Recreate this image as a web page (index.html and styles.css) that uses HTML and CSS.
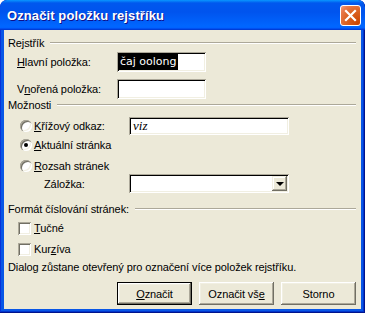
FILE: index.html
```html
<!DOCTYPE html>
<html lang="cs">
<head>
  <meta charset="UTF-8" />
  <title>Označit položku rejstříku</title>
  <link rel="stylesheet" href="styles.css">
</head>
<body>
  <div class="window">
    <div class="titlebar">
      <span class="title">Označit položku rejstříku</span>
      <div class="close">
        <svg width="21" height="21" viewBox="0 0 21 21">
          <path d="M6 6 L15 15 M15 6 L6 15" stroke="#fff" stroke-width="2.2" stroke-linecap="square"/>
        </svg>
      </div>
    </div>

    <div class="client">
      <!-- Rejstřík -->
      <div class="group-head h1"><span>Rejstřík</span><i></i></div>
      <div class="row entry r-main">
        <label><u>H</u>lavní položka:</label>
        <div class="field entry-field"><span class="sel">čaj oolong</span></div>
      </div>
      <div class="row entry r-sub">
        <label>V<u>n</u>ořená položka:</label>
        <div class="field entry-field"></div>
      </div>

      <!-- Možnosti -->
      <div class="group-head h2"><span>Možnosti</span><i></i></div>
      <div class="row opt r-cross">
        <span class="radio"></span>
        <label class="opt-label"><u>K</u>řížový odkaz:</label>
        <div class="field wide-field"><span class="viz">viz</span></div>
      </div>
      <div class="row opt r-cur">
        <span class="radio on"></span>
        <label><u>A</u>ktuální stránka</label>
      </div>
      <div class="row opt r-range">
        <span class="radio"></span>
        <label><u>R</u>ozsah stránek</label>
      </div>
      <div class="row r-mark">
        <label class="mark-label">Záložka:</label>
        <div class="field combo">
          <span class="drop"><i></i></span>
        </div>
      </div>

      <!-- Formát -->
      <div class="group-head h3"><span>Formát číslování stránek:</span><i></i></div>
      <div class="row chk r-bold">
        <span class="check"></span>
        <label><u>T</u>učné</label>
      </div>
      <div class="row chk r-ital">
        <span class="check"></span>
        <label>Kur<u>z</u>íva</label>
      </div>

      <div class="row note">Dialog zůstane otevřený pro označení více položek rejstříku.</div>

      <div class="buttons">
        <div class="btn default"><span><u>O</u>značit</span></div>
        <div class="btn"><span>Označit vš<u>e</u></span></div>
        <div class="btn"><span>Storno</span></div>
      </div>
    </div>
  </div>
</body>
</html>
```

FILE: styles.css
```css
* { box-sizing: border-box; }
body {
  margin: 0;
  background: #fff;
  font-family: 'Liberation Sans', Arial, sans-serif;
  font-size: 11px;
  letter-spacing: -0.1px;
  color: #000;
}
u { text-decoration: underline; text-underline-offset: 1px; }

.window {
  width: 365px;
  height: 313px;
  display: flex;
  flex-direction: column;
  background: #0856e6;
  border-radius: 7px 7px 0 0;
  box-shadow: inset -1px -1px #00138c, inset 1px 1px #0831d9, inset -2px -2px #0035cc;
  overflow: hidden;
}
.titlebar {
  height: 30px;
  flex: none;
  display: flex;
  align-items: center;
  justify-content: space-between;
  padding: 0 4px 0 7px;
  background: linear-gradient(180deg, #0997ff, #0058ee 10%, #0054ee 40%, #0066ff 86%, #0066ff 91%, #005bff 94%, #003dd7 97%, #003dd7);
  border-radius: 7px 7px 0 0;
}
.title {
  font-family: 'Liberation Sans', Arial, sans-serif;
  font-weight: bold;
  font-size: 13px;
  color: #fff;
  text-shadow: 1px 1px #0f1089;
  letter-spacing: 0.1px;
}
.close {
  width: 21px;
  height: 21px;
  border: 1px solid #fff;
  border-radius: 3px;
  background: radial-gradient(circle at 90% 90%, #cc4600 0%, #dc6527 55%, #e8794a 80%, #f2a083 100%);
  display: flex;
  align-items: center;
  justify-content: center;
  margin-top: 1px;
}
.close svg { display: block; margin: -1px; }

.client {
  flex: 1;
  margin: 0 4px 4px 4px;
  background: #ece9d8;
  padding: 6px 5px 0 4px;
  display: flex;
  flex-direction: column;
}

.row {
  display: flex;
  align-items: center;
  white-space: nowrap;
}

/* group headers with etched line */
.group-head {
  display: flex;
  align-items: center;
  height: 14px;
}
.group-head i {
  flex: 1;
  height: 2px;
  margin-left: 6px;
  border-top: 1px solid #aca899;
  border-bottom: 1px solid #fff;
}
.h2 { height: 12px; }
.h3 { margin-top: 9px; }

/* sunken fields */
.field {
  background: #fff;
  box-shadow: inset 1px 1px #aca899, inset -1px -1px #fff, inset 2px 2px #000, inset -2px -2px #f1efe2;
  display: flex;
  align-items: center;
}

.entry label { width: 109px; padding-left: 9px; }
.entry-field { width: 89px; height: 20px; padding-left: 2px; }
.r-main { margin-top: 2px; }
.r-sub { margin-top: 7px; }

.sel {
  background: #000;
  color: #fff;
  font-family: 'DejaVu Sans', sans-serif;
  font-size: 11px;
  letter-spacing: 0;
  line-height: 16px;
  padding: 0 1px;
}

.opt label { margin-left: 2px; }
.opt-label { width: 95px; }
.r-cross { margin-top: 6px; height: 18px; }
.r-cur { margin-top: 2px; height: 16px; }
.r-range { margin-top: 5px; height: 16px; }
.wide-field { width: 160px; height: 18px; padding-left: 4px; }
.viz {
  font-family: 'Liberation Serif', 'Times New Roman', serif;
  font-style: italic;
  font-size: 13px;
  letter-spacing: 0;
}

.radio {
  width: 12px;
  height: 12px;
  margin-left: 12px;
  border-radius: 50%;
  background: #fff;
  position: relative;
  box-shadow: inset 1px 1px #aca899, inset 2px 2px #716f64, inset -1px -1px #fff, inset -2px -2px #f1efe2;
}
.radio.on::after {
  content: "";
  position: absolute;
  left: 4px;
  top: 4px;
  width: 4px;
  height: 4px;
  border-radius: 50%;
  background: #000;
}

.r-mark { height: 19px; }
.mark-label { width: 121px; padding-left: 36px; }
.combo {
  width: 160px;
  height: 19px;
  justify-content: flex-end;
  padding-right: 2px;
}
.drop {
  width: 15px;
  height: 15px;
  background: #ece9d8;
  box-shadow: inset -1px -1px #716f64, inset 1px 1px #f1efe2, inset -2px -2px #aca899, inset 2px 2px #fff;
  display: flex;
  align-items: center;
  justify-content: center;
}
.drop i {
  width: 0;
  height: 0;
  border-left: 4px solid transparent;
  border-right: 4px solid transparent;
  border-top: 4px solid #000;
  margin-top: 1px;
}

.check {
  width: 13px;
  height: 13px;
  margin-left: 10px;
  margin-right: 3px;
  background: #fff;
  box-shadow: inset 1px 1px #aca899, inset -1px -1px #fff, inset 2px 2px #716f64, inset -2px -2px #f1efe2;
}
.r-bold { margin-top: 4px; height: 16px; }
.r-ital { margin-top: 5px; height: 16px; }

.note { margin-top: 3px; height: 14px; }

.buttons {
  margin-top: 8px;
  display: flex;
  justify-content: flex-end;
  gap: 7px;
}
.btn {
  width: 75px;
  height: 23px;
  background: #ece9d8;
  box-shadow: inset -1px -1px #716f64, inset 1px 1px #fff, inset -2px -2px #aca899, inset 2px 2px #f1efe2;
  display: flex;
  align-items: center;
  justify-content: center;
}
.btn.default {
  box-shadow: inset 0 0 0 1px #000, inset -2px -2px #716f64, inset 2px 2px #fff, inset -3px -3px #aca899, inset 3px 3px #f1efe2;
}
```
